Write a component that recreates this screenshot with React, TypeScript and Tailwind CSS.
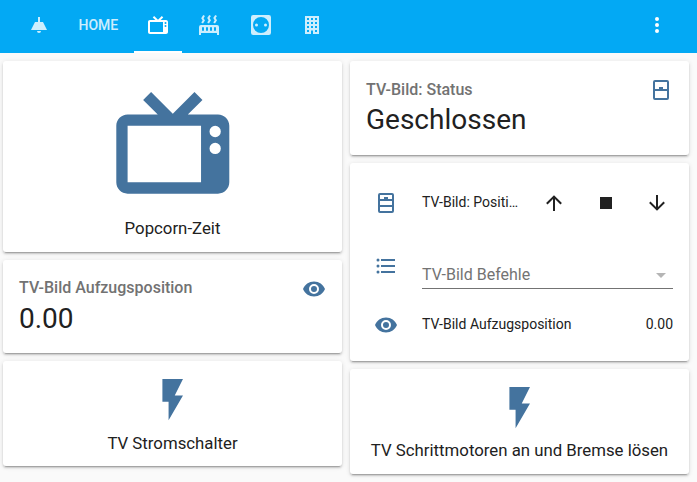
import type { ReactNode } from "react";

const paths = {
  lamp: "M8,9H11V4H13V9H16L20,17H4L8,9M14,18A2,2 0 0,1 12,20A2,2 0 0,1 10,18H14Z",
  tv: "M8.16,3L6.75,4.41L9.34,7H4C2.89,7 2,7.89 2,9V19C2,20.11 2.89,21 4,21H20C21.11,21 22,20.11 22,19V9C22,7.89 21.11,7 20,7H14.66L17.25,4.41L15.84,3L12,6.84L8.16,3M4,9H17V19H4V9M19.5,9A1,1 0 0,1 20.5,10A1,1 0 0,1 19.5,11A1,1 0 0,1 18.5,10A1,1 0 0,1 19.5,9M19.5,12A1,1 0 0,1 20.5,13A1,1 0 0,1 19.5,14A1,1 0 0,1 18.5,13A1,1 0 0,1 19.5,12Z",
  radiator:
    "M7.95,3L6.53,5.19L7.95,7.4L5.95,10.5L4.22,9.6L5.64,7.39L4.22,5.19L6.22,2.09L7.95,3M13.95,2.89L12.53,5.1L13.95,7.3L11.95,10.4L10.22,9.5L11.64,7.3L10.22,5.1L12.22,2L13.95,2.89M20,2.89L18.56,5.1L20,7.3L18,10.4L16.25,9.5L17.67,7.3L16.25,5.1L18.25,2L20,2.89M2,22V14A2,2 0 0,1 4,12H20A2,2 0 0,1 22,14V22H20V20H4V22H2M6,14A1,1 0 0,0 5,15V17A1,1 0 0,0 7,17V15A1,1 0 0,0 6,14M10,14A1,1 0 0,0 9,15V17A1,1 0 0,0 11,17V15A1,1 0 0,0 10,14M14,14A1,1 0 0,0 13,15V17A1,1 0 0,0 15,17V15A1,1 0 0,0 14,14M18,14A1,1 0 0,0 17,15V17A1,1 0 0,0 19,17V15A1,1 0 0,0 18,14Z",
  socket:
    "M4.2,2H19.8A2.2,2.2 0 0,1 22,4.2V19.8A2.2,2.2 0 0,1 19.8,22H4.2A2.2,2.2 0 0,1 2,19.8V4.2A2.2,2.2 0 0,1 4.2,2M12,4A8,8 0 0,0 4,12A8,8 0 0,0 12,20A8,8 0 0,0 20,12A8,8 0 0,0 12,4M7.5,10.5A1.5,1.5 0 0,1 7.5,13.5A1.5,1.5 0 0,1 7.5,10.5M16.5,10.5A1.5,1.5 0 0,1 16.5,13.5A1.5,1.5 0 0,1 16.5,10.5Z",
  office:
    "M5,3V21H11V17.5H13V21H19V3H5M7,5H9V7H7V5M11,5H13V7H11V5M15,5H17V7H15V5M7,9H9V11H7V9M11,9H13V11H11V9M15,9H17V11H15V9M7,13H9V15H7V13M11,13H13V15H11V13M15,13H17V15H15V13M7,17H9V19H7V17M15,17H17V19H15V17Z",
  dots: "M12,16A2,2 0 0,1 14,18A2,2 0 0,1 10,18A2,2 0 0,1 12,16M12,10A2,2 0 0,1 14,12A2,2 0 0,1 10,12A2,2 0 0,1 12,10M12,4A2,2 0 0,1 14,6A2,2 0 0,1 10,6A2,2 0 0,1 12,4Z",
  eye: "M12,9A3,3 0 0,0 9,12A3,3 0 0,0 12,15A3,3 0 0,0 15,12A3,3 0 0,0 12,9M12,17A5,5 0 0,1 7,12A5,5 0 0,1 12,7A5,5 0 0,1 17,12A5,5 0 0,1 12,17M12,4.5C7,4.5 2.73,7.61 1,12C2.73,16.39 7,19.5 12,19.5C17,19.5 21.27,16.39 23,12C21.27,7.61 17,4.5 12,4.5Z",
  flash: "M7,2V13H10V22L17,10H13L17,2H7Z",
  cabinet:
    "M6,2H18A2,2 0 0,1 20,4V20A2,2 0 0,1 18,22H6A2,2 0 0,1 4,20V4A2,2 0 0,1 6,2M6,4V11H10V9H14V11H18V4H6M6,13V20H18V13H6Z",
  drawers:
    "M6,2H18A2,2 0 0,1 20,4V20A2,2 0 0,1 18,22H6A2,2 0 0,1 4,20V4A2,2 0 0,1 6,2M6,4V8H10V6H14V8H18V4H6M6,10V14H18V10H6M6,16V20H18V16H6Z",
  list: "M7,5H21V7H7V5M7,13V11H21V13H7M4,4.5A1.5,1.5 0 0,1 4,7.5A1.5,1.5 0 0,1 4,4.5M4,10.5A1.5,1.5 0 0,1 4,13.5A1.5,1.5 0 0,1 4,10.5M7,19V17H21V19H7M4,16.5A1.5,1.5 0 0,1 4,19.5A1.5,1.5 0 0,1 4,16.5Z",
  up: "M13,20H11V8L5.5,13.5L4.08,12.08L12,4.16L19.92,12.08L18.5,13.5L13,8V20Z",
  stop: "M18,18H6V6H18V18Z",
  down: "M11,4H13V16L18.5,10.5L19.92,11.92L12,19.84L4.08,11.92L5.5,10.5L11,16V4Z",
  caret: "M7,10L12,15L17,10H7Z",
};

function Icon({ name, className = "size-6" }: { name: keyof typeof paths; className?: string }) {
  return (
    <svg viewBox="0 0 24 24" fill="currentColor" fillRule="evenodd" className={`block shrink-0 ${className}`}>
      <path d={paths[name]} />
    </svg>
  );
}

function Card({ className = "", children }: { className?: string; children: ReactNode }) {
  return (
    <section
      className={`rounded-[3px] bg-white shadow-[0_2px_2px_0_rgba(0,0,0,0.14),0_1px_5px_0_rgba(0,0,0,0.12),0_3px_1px_-2px_rgba(0,0,0,0.2)] ${className}`}
    >
      {children}
    </section>
  );
}

function ButtonCard({
  icon,
  iconClass,
  label,
  labelClass = "mt-2",
  className,
}: {
  icon: keyof typeof paths;
  iconClass: string;
  label: string;
  labelClass?: string;
  className: string;
}) {
  return (
    <Card className={`flex flex-col items-center pt-[13.6px] ${className}`}>
      <Icon name={icon} className={`text-[#44739e] ${iconClass}`} />
      <span className={`text-[16.8px] leading-5 whitespace-nowrap ${labelClass}`}>{label}</span>
    </Card>
  );
}

function EntityCard({
  icon,
  title,
  titleClass = "",
  value,
  className,
}: {
  icon: keyof typeof paths;
  title: string;
  titleClass?: string;
  value: string;
  className: string;
}) {
  return (
    <Card className={`px-4 ${className}`}>
      <div className="flex h-[41px] justify-between pt-[17px]">
        <span className={`text-base leading-6 font-medium text-[#727272] ${titleClass}`}>{title}</span>
        <Icon name={icon} className="size-6 text-[#44739e]" />
      </div>
      <div className="text-[28px] leading-9">{value}</div>
    </Card>
  );
}

function Tab({ active = false, children }: { active?: boolean; children: ReactNode }) {
  return (
    <div
      className={`flex h-[53px] items-center border-b-2 px-3 pb-px text-sm font-medium ${
        active ? "border-white" : "border-transparent text-white/80"
      }`}
    >
      {children}
    </div>
  );
}

export default function App() {
  return (
    <div className="h-[482px] w-[697px] overflow-hidden bg-[#fafafa] font-['Roboto',sans-serif] text-[#212121]">
      <header className="flex h-[53px] items-start bg-[#03a9f4] pr-7 pl-[15px] text-white">
        <nav className="flex flex-1 gap-[3.5px]">
          <Tab><Icon name="lamp" /></Tab>
          <Tab>HOME</Tab>
          <Tab active><Icon name="tv" /></Tab>
          <Tab><Icon name="radiator" /></Tab>
          <Tab><Icon name="socket" /></Tab>
          <Tab><Icon name="office" /></Tab>
        </nav>
        <Icon name="dots" className="mt-[13px] size-6" />
      </header>
      <main className="flex gap-2 pt-2 pl-[3px]">
        <div className="flex w-[339px] flex-col gap-2">
          <ButtonCard icon="tv" iconClass="size-[135.6px]" label="Popcorn-Zeit" className="h-[191px]" />
          <EntityCard icon="eye" title="TV-Bild Aufzugsposition" titleClass="-mt-px" value="0.00" className="h-[93px]" />
          <ButtonCard icon="flash" iconClass="size-[49.4px]" label="TV Stromschalter" labelClass="mt-[9px]" className="h-[105px]" />
        </div>
        <div className="flex w-[339px] flex-col gap-2">
          <EntityCard icon="cabinet" title="TV-Bild: Status" value="Geschlossen" className="h-[94px]" />
          <Card className="h-[198px] px-4 pt-5 text-sm">
            <div className="flex h-10 items-center">
              <Icon name="drawers" className="mx-2 size-6 text-[#44739e]" />
              <span className="ml-4 w-[98px] pb-0.5 whitespace-nowrap">TV-Bild: Positi…</span>
              <div className="ml-[22px] flex flex-1 justify-between pr-1">
                <Icon name="up" />
                <Icon name="stop" />
                <Icon name="down" />
              </div>
            </div>
            <div className="mt-[31px] flex">
              <Icon name="list" className="mx-2 size-6 text-[#44739e]" />
              <div className="mt-[9px] ml-4 flex h-[26px] flex-1 items-start justify-between border-b border-[#737373] text-base leading-6 text-[#737373]">
                <span>TV-Bild Befehle</span>
                <Icon name="caret" className="size-6 text-[#b5b5b5]" />
              </div>
            </div>
            <div className="mt-4 flex h-10 items-center">
              <Icon name="eye" className="mx-2 size-6 text-[#44739e]" />
              <span className="ml-4 flex-1 pb-0.5">TV-Bild Aufzugsposition</span>
              <span className="pb-0.5">0.00</span>
            </div>
          </Card>
          <ButtonCard icon="flash" iconClass="size-[49.4px]" label="TV Schrittmotoren an und Bremse lösen" className="h-[105px]" />
        </div>
      </main>
    </div>
  );
}
